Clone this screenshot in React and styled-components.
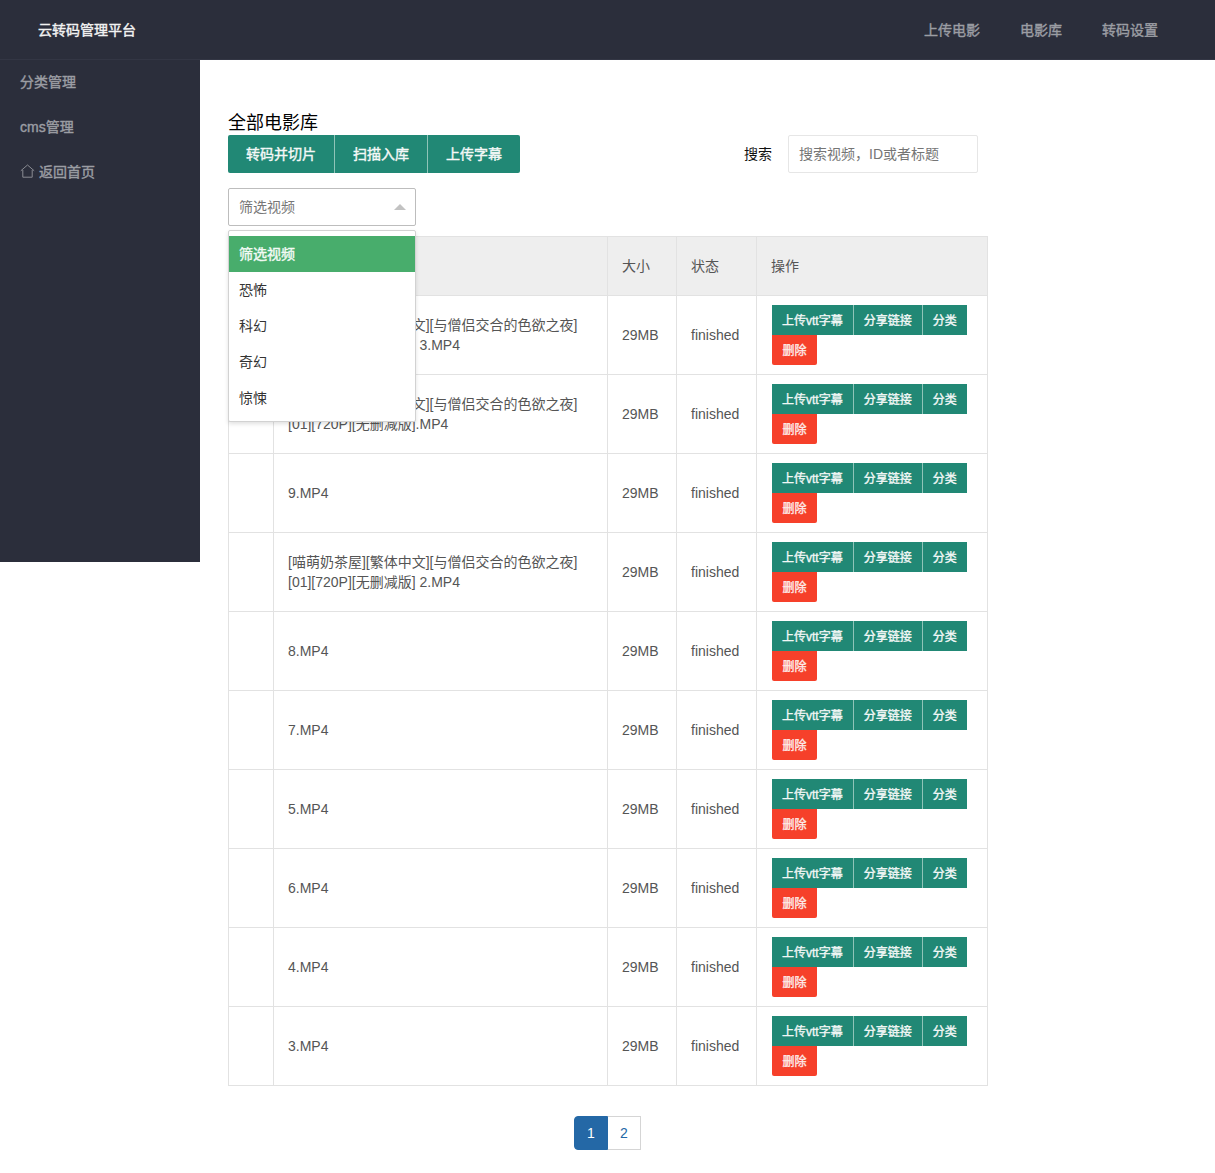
import React from "react";
import styled, { createGlobalStyle } from "styled-components";

const FONT = `"Liberation Sans", "Noto Sans CJK SC", sans-serif`;

const Global = createGlobalStyle`
  html, body { margin: 0; padding: 0; background: #fff; }
  body { font-family: ${FONT}; font-size: 14px; color: #555; }
  * { box-sizing: border-box; }
`;

const Header = styled.header`
  height: 60px;
  background: #2b2e3b;
  display: flex;
  align-items: center;
  justify-content: space-between;
  padding: 0 57px 2px 38px;
  border-bottom: 1px solid #333644;
`;
const Brand = styled.div`
  color: #f2f2f2;
  font-size: 14px;
  -webkit-text-stroke: 0.4px #f2f2f2;
`;
const TopNav = styled.nav`
  display: flex;
  gap: 40px;
`;
const TopLink = styled.a`
  color: #9b9da3;
  font-size: 14px;
  -webkit-text-stroke: 0.4px #9b9da3;
`;
const Body = styled.div`
  display: flex;
  align-items: flex-start;
`;
const Sidebar = styled.aside`
  width: 200px;
  flex: none;
  height: 502px;
  background: #2b2e3b;
  display: flex;
  flex-direction: column;
`;
const SideItem = styled.a`
  height: 45px;
  padding: 0 0 4px 20px;
  display: flex;
  align-items: center;
  gap: 4px;
  color: #9b9da3;
  font-size: 14px;
  -webkit-text-stroke: 0.4px #9b9da3;
`;
const Main = styled.main`
  width: 760px;
  margin-left: 28px;
  padding-top: 52px;
`;
const Title = styled.h1`
  margin: 0;
  height: 23px;
  line-height: 23px;
  font-size: 18px;
  font-weight: 400;
  color: #000;
`;
const Toolbar = styled.div`
  display: flex;
  align-items: center;
  justify-content: space-between;
  padding-right: 10px;
  height: 38px;
`;
const Group = styled.div`
  display: inline-flex;
  border-radius: 2px;
  overflow: hidden;
`;
const Btn = styled.button`
  height: 38px;
  padding: 0 18px 2px;
  border: 0;
  border-left: ${(p) => (p.$first ? "0" : "1px solid #8fc4b8")};
  background: #218875;
  color: #f4f8f7;
  font: 400 14px ${FONT};
  -webkit-text-stroke: 0.4px #f4f8f7;
`;
const SearchBox = styled.div`
  display: flex;
  align-items: center;
  gap: 16px;
`;
const SearchLabel = styled.label`
  color: #111;
  font-size: 14px;
  padding-bottom: 2px;
`;
const SearchInput = styled.div`
  width: 190px;
  height: 38px;
  border: 1px solid #e6e6e6;
  border-radius: 2px;
  padding: 0 0 2px 10px;
  display: flex;
  align-items: center;
  color: #757575;
  font-size: 14px;
`;
const SelectWrap = styled.div`
  position: relative;
  width: 188px;
  margin: 15px 0 10px;
`;
const SelectBox = styled.div`
  height: 38px;
  border: 1px solid #bdbdbd;
  border-radius: 2px;
  padding: 0 0 2px 10px;
  display: flex;
  align-items: center;
  color: #777;
  font-size: 14px;
  position: relative;
`;
const Caret = styled.span`
  position: absolute;
  right: 9px;
  top: 15px;
  width: 0;
  height: 0;
  border-left: 6px solid transparent;
  border-right: 6px solid transparent;
  border-bottom: 6px solid #c2c2c2;
`;
const Menu = styled.ul`
  position: absolute;
  top: 42px;
  left: 0;
  width: 188px;
  margin: 0;
  padding: 5px 0;
  list-style: none;
  background: #fff;
  border: 1px solid #d2d2d2;
  border-radius: 2px;
  box-shadow: 0 2px 4px rgba(0, 0, 0, 0.12);
  z-index: 5;
`;
const MenuItem = styled.li`
  height: 36px;
  line-height: 36px;
  padding-left: 10px;
  font-size: 14px;
  color: ${(p) => (p.$active ? "#f3faf5" : "#333")};
  background: ${(p) => (p.$active ? "#48ad6c" : "#fff")};
  -webkit-text-stroke: ${(p) => (p.$active ? "0.4px #f3faf5" : "0")};
`;
const Table = styled.table`
  width: 760px;
  table-layout: fixed;
  border-collapse: collapse;
  font-size: 14px;
  color: #555;
`;
const Th = styled.th`
  height: 59px;
  padding: 0 15px 2px 14px;
  background: #eee;
  border: 1px solid #e2e2e2;
  text-align: left;
  font-weight: 400;
`;
const Td = styled.td`
  height: 79px;
  padding: 0 12px 0 14px;
  border: 1px solid #e2e2e2;
  line-height: 20px;
  vertical-align: middle;
`;
const ActionTd = styled(Td)`
  padding: 0 15px;
`;
const Actions = styled.div`
  display: flex;
  flex-wrap: wrap;
  width: 200px;
`;
const MiniGroup = styled.div`
  display: flex;
  height: 30px;
`;
const MiniBtn = styled.button`
  height: 30px;
  padding: 0 10px 2px;
  border: 0;
  border-left: ${(p) => (p.$first ? "0" : "1px solid #8fc4b8")};
  background: #218875;
  color: #f2f7f6;
  font: 400 12px ${FONT};
  -webkit-text-stroke: 0.35px #f2f7f6;
  white-space: nowrap;
`;
const DeleteBtn = styled.button`
  height: 30px;
  width: 45px;
  padding: 0 0 2px;
  border: 0;
  border-radius: 0 0 2px 2px;
  background: #f6402a;
  color: #fdecea;
  font: 400 12px ${FONT};
  -webkit-text-stroke: 0.35px #fdecea;
`;
const Pager = styled.div`
  display: flex;
  justify-content: center;
  margin-top: 30px;
  padding-right: 1px;
`;
const Page = styled.a`
  width: ${(p) => (p.$active ? "34px" : "33px")};
  height: 34px;
  display: flex;
  align-items: center;
  justify-content: center;
  font-size: 14px;
  color: ${(p) => (p.$active ? "#fff" : "#2468a6")};
  background: ${(p) => (p.$active ? "#2468a6" : "#fff")};
  border: ${(p) => (p.$active ? "1px solid #2468a6" : "1px solid #d5d5d5")};
  border-left-width: ${(p) => (p.$active ? "1px" : "0")};
  border-radius: ${(p) => (p.$active ? "4px 0 0 4px" : "0")};
`;

const HomeIcon = () => (
  <svg width="15" height="14" viewBox="0 0 15 14" fill="none" stroke="#8a8c93" strokeWidth="1">
    <path d="M0.8 6.8 7.5 1l6.7 5.8M2.8 6v7.2h9.4V6" />
  </svg>
);

const longA = "[喵萌奶茶屋][繁体中文][与僧侣交合的色欲之夜][01][720P][无删减版] 3.MP4";
const longB = "[喵萌奶茶屋][繁体中文][与僧侣交合的色欲之夜][01][720P][无删减版].MP4";
const longC = "[喵萌奶茶屋][繁体中文][与僧侣交合的色欲之夜][01][720P][无删减版] 2.MP4";
const rows = [longA, longB, "9.MP4", longC, "8.MP4", "7.MP4", "5.MP4", "6.MP4", "4.MP4", "3.MP4"];

export default function App() {
  return (
    <>
      <Global />
      <Header>
        <Brand>云转码管理平台</Brand>
        <TopNav>
          <TopLink>上传电影</TopLink>
          <TopLink>电影库</TopLink>
          <TopLink>转码设置</TopLink>
        </TopNav>
      </Header>
      <Body>
        <Sidebar>
          <SideItem>分类管理</SideItem>
          <SideItem>cms管理</SideItem>
          <SideItem><HomeIcon />返回首页</SideItem>
        </Sidebar>
        <Main>
          <Title>全部电影库</Title>
          <Toolbar>
            <Group>
              <Btn $first>转码并切片</Btn>
              <Btn>扫描入库</Btn>
              <Btn>上传字幕</Btn>
            </Group>
            <SearchBox>
              <SearchLabel>搜索</SearchLabel>
              <SearchInput>搜索视频，ID或者标题</SearchInput>
            </SearchBox>
          </Toolbar>
          <SelectWrap>
            <SelectBox>筛选视频<Caret /></SelectBox>
            <Menu>
              <MenuItem $active>筛选视频</MenuItem>
              <MenuItem>恐怖</MenuItem>
              <MenuItem>科幻</MenuItem>
              <MenuItem>奇幻</MenuItem>
              <MenuItem>惊悚</MenuItem>
            </Menu>
          </SelectWrap>
          <Table>
            <colgroup>
              <col style={{ width: 45 }} />
              <col style={{ width: 334 }} />
              <col style={{ width: 69 }} />
              <col style={{ width: 80 }} />
              <col />
            </colgroup>
            <thead>
              <tr>
                <Th />
                <Th>视频标题</Th>
                <Th>大小</Th>
                <Th>状态</Th>
                <Th>操作</Th>
              </tr>
            </thead>
            <tbody>
              {rows.map((name, i) => (
                <tr key={i}>
                  <Td />
                  <Td>{name}</Td>
                  <Td>29MB</Td>
                  <Td>finished</Td>
                  <ActionTd>
                    <Actions>
                      <MiniGroup>
                        <MiniBtn $first>上传vtt字幕</MiniBtn>
                        <MiniBtn>分享链接</MiniBtn>
                        <MiniBtn>分类</MiniBtn>
                      </MiniGroup>
                      <DeleteBtn>删除</DeleteBtn>
                    </Actions>
                  </ActionTd>
                </tr>
              ))}
            </tbody>
          </Table>
          <Pager>
            <Page $active>1</Page>
            <Page>2</Page>
          </Pager>
        </Main>
      </Body>
    </>
  );
}
